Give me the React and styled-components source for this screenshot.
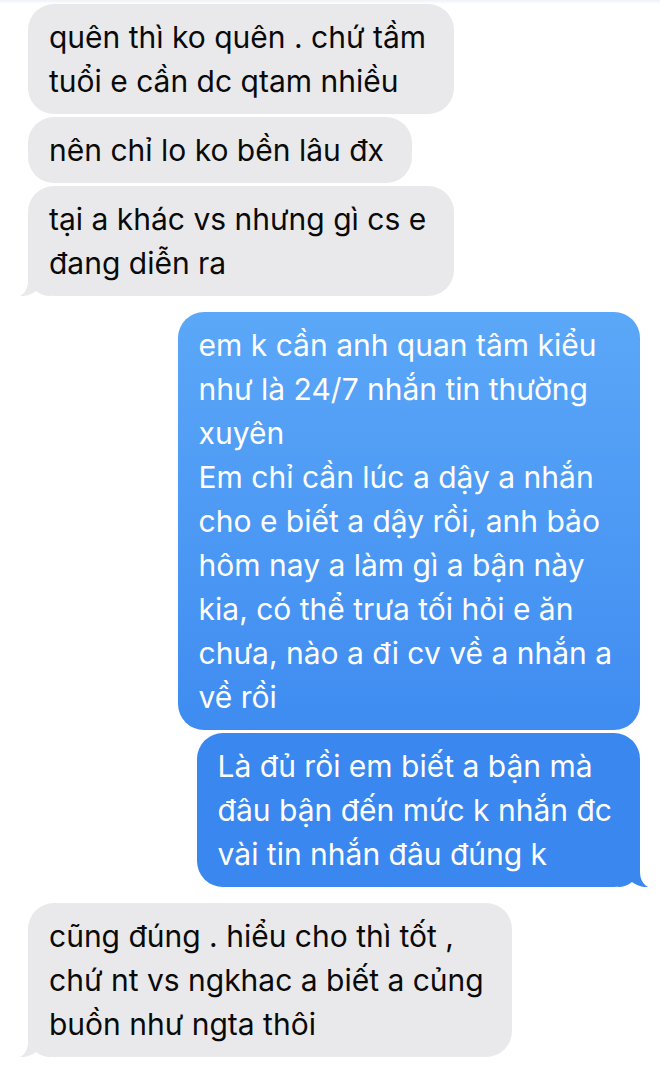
import styled, { createGlobalStyle } from "styled-components";

const GlobalStyle = createGlobalStyle`
  html, body {
    margin: 0;
    padding: 0;
    background: #fff;
  }
  body {
    font-family: "Inter", "Noto Sans", sans-serif;
    -webkit-font-smoothing: antialiased;
  }
`;

const messages = [
  { from: "them", text: "quên thì ko quên . chứ tầm\ntuổi e cần dc qtam nhiều" },
  { from: "them", text: "nên chỉ lo ko bền lâu đx" },
  { from: "them", text: "tại a khác vs nhưng gì cs e\nđang diễn ra", tail: true },
  {
    from: "me",
    text:
      "em k cần anh quan tâm kiểu\nnhư là 24/7 nhắn tin thường\nxuyên\nEm chỉ cần lúc a dậy a nhắn\ncho e biết a dậy rồi, anh bảo\nhôm nay a làm gì a bận này\nkia, có thể trưa tối hỏi e ăn\nchưa, nào a đi cv về a nhắn a\nvề rồi",
    gradient: true,
  },
  { from: "me", text: "Là đủ rồi em biết a bận mà\nđâu bận đến mức k nhắn đc\nvài tin nhắn đâu đúng k", tail: true },
  { from: "them", text: "cũng đúng . hiểu cho thì tốt ,\nchứ nt vs ngkhac a biết a củng\nbuồn như ngta thôi", tail: true },
];

export default function App() {
  return (
    <>
      <GlobalStyle />
      <Thread>
        <TopEdge />
        {messages.map((m, i) => {
          const next = messages[i + 1];
          const groupEnd = !next || next.from !== m.from;
          return (
            <Row key={i} $me={m.from === "me"} $gap={groupEnd ? 16 : 3}>
              <Bubble $me={m.from === "me"} $gradient={m.gradient}>
                {m.text}
                {m.tail && <Tail me={m.from === "me"} />}
              </Bubble>
            </Row>
          );
        })}
      </Thread>
    </>
  );
}

// little iMessage-style tail under the last bubble of a group
function Tail({ me }) {
  return (
    <TailSvg $me={me} width="30" height="27" viewBox="0 0 30 27">
      <path
        d="M8 0 L8 12 C8 20 4 25 0 27 C6 27.5 12 25 16 22 C20 25.5 25 27 30 27 L30 0 Z"
        fill="currentColor"
      />
    </TailSvg>
  );
}

const Thread = styled.div`
  display: flex;
  flex-direction: column;
  padding: 0 20px 0 28px;
`;

const TopEdge = styled.div`
  height: 4px;
  margin: 0 -20px 0 -28px;
  background: linear-gradient(#eef2f6, #fff);
`;

const Row = styled.div`
  display: flex;
  justify-content: ${(p) => (p.$me ? "flex-end" : "flex-start")};
  margin-bottom: ${(p) => p.$gap}px;
`;

const Bubble = styled.div`
  position: relative;
  white-space: pre-line;
  font-size: 30px;
  line-height: 44px;
  padding: 11px 28px 11px 21px;
  border-radius: 26px;
  color: ${(p) => (p.$me ? "#fff" : "#0a0a0a")};
  background: ${(p) =>
    p.$me
      ? p.$gradient
        ? "linear-gradient(#5ba7f8, #3f8cf1)"
        : "#3a87f0"
      : "#e9e9eb"};
  --tail: ${(p) => (p.$me ? "#3a87f0" : "#e9e9eb")};
`;

const TailSvg = styled.svg`
  position: absolute;
  bottom: 0;
  color: var(--tail);
  ${(p) => (p.$me ? "right: -8px; transform: scaleX(-1);" : "left: -8px;")}
`;
